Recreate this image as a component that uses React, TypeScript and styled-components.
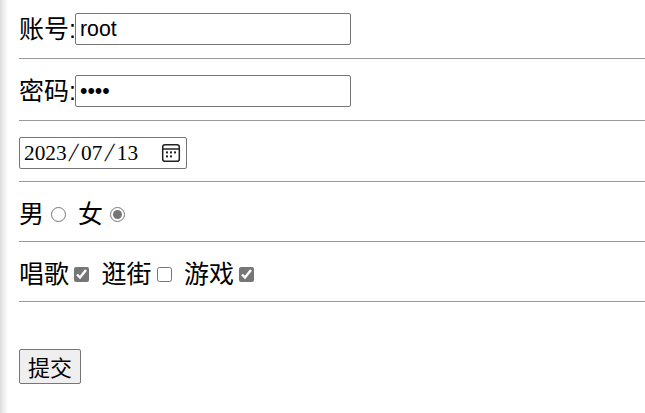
import styled, { createGlobalStyle } from 'styled-components';

const GlobalStyle = createGlobalStyle`
  html, body {
    margin: 0;
    padding: 0;
    background: #fff;
  }
`;

const Page = styled.form`
  box-sizing: border-box;
  height: 413px;
  overflow: hidden;
  padding: 13px 0 0 19px;
  background: linear-gradient(to right, #dcdcdc 0, #f0f0f0 4px, #fff 8px);
  font-family: 'Liberation Sans', 'Noto Sans CJK SC', sans-serif;
  font-size: 25px;
  color: #000;
`;

const Row = styled.div`
  display: flex;
  align-items: center;
  height: 32px;
`;

const Rule = styled.hr<{ $top: number; $bottom: number }>`
  height: 1px;
  border: 0;
  background: #999;
  margin: ${({ $top, $bottom }) => `${$top}px 0 ${$bottom}px`};
`;

const Label = styled.label`
  line-height: 32px;
  white-space: nowrap;
`;

const TextInput = styled.input`
  box-sizing: border-box;
  width: 276px;
  height: 32px;
  margin: 0 0 0 -1px;
  padding: 0 4px;
  border: 1px solid #767676;
  border-radius: 2px;
  font-family: 'Liberation Sans', sans-serif;
  font-size: 21.3px;
  color: #000;
  outline: none;
`;

const DateBox = styled.div`
  box-sizing: border-box;
  display: flex;
  align-items: center;
  justify-content: space-between;
  width: 168px;
  height: 32px;
  padding: 0 5px 0 4px;
  border: 1px solid #767676;
  border-radius: 2px;
  font-family: 'Liberation Serif', 'DejaVu Serif', serif;
  font-size: 21.3px;
`;

const DateText = styled.span`
  display: flex;
  align-items: center;
  white-space: nowrap;
`;

const Sep = styled.span`
  display: inline-block;
  margin: 0 3.6px;
  font-size: 26px;
  line-height: 1;
  transform: skewX(-12deg);
`;

const Option = styled.div`
  display: flex;
  align-items: center;
`;

const Choice = styled.input`
  width: 15px;
  height: 15px;
  margin: 1px 12.5px 0 5px;
  accent-color: #767676;

  &[type='radio'] {
    margin-left: 6.5px;
  }
`;

const Submit = styled.button`
  box-sizing: border-box;
  width: 62px;
  height: 35px;
  padding: 0 0 2px;
  border: 1px solid #767676;
  border-radius: 2px;
  background: #efefef;
  font-family: 'Liberation Sans', 'Noto Sans CJK SC', sans-serif;
  font-size: 22px;
  color: #000;
`;

const CalendarIcon = () => (
  <svg width="20" height="20" viewBox="0 0 20 20" fill="none">
    <rect x="1.7" y="1.7" width="16.6" height="16.6" rx="2.4" stroke="#222" strokeWidth="1.5" />
    <path d="M2 6h16" stroke="#222" strokeWidth="1.5" />
    <g fill="#222">
      <rect x="5" y="8.4" width="2" height="2" />
      <rect x="9" y="8.4" width="2" height="2" />
      <rect x="13" y="8.4" width="2" height="2" />
      <rect x="5" y="12.4" width="2" height="2" />
      <rect x="9" y="12.4" width="2" height="2" />
    </g>
  </svg>
);

export default function App() {
  return (
    <>
      <GlobalStyle />
      <Page onSubmit={e => e.preventDefault()}>
        <Row>
          <Label>账号:</Label>
          <TextInput type="text" defaultValue="root" />
        </Row>
        <Rule $top={13} $bottom={16} />
        <Row>
          <Label>密码:</Label>
          <TextInput type="password" defaultValue="root" />
        </Row>
        <Rule $top={13} $bottom={16} />
        <Row>
          <DateBox>
            <DateText>
              2023<Sep>/</Sep>07<Sep>/</Sep>13
            </DateText>
            <CalendarIcon />
          </DateBox>
        </Row>
        <Rule $top={12} $bottom={16} />
        <Row>
          <Option>
            <Label>男</Label>
            <Choice type="radio" name="sex" />
          </Option>
          <Option>
            <Label>女</Label>
            <Choice type="radio" name="sex" defaultChecked />
          </Option>
        </Row>
        <Rule $top={11} $bottom={16} />
        <Row>
          <Option>
            <Label>唱歌</Label>
            <Choice type="checkbox" defaultChecked />
          </Option>
          <Option>
            <Label>逛街</Label>
            <Choice type="checkbox" />
          </Option>
          <Option>
            <Label>游戏</Label>
            <Choice type="checkbox" defaultChecked />
          </Option>
        </Row>
        <Rule $top={11} $bottom={47} />
        <Submit type="submit">提交</Submit>
      </Page>
    </>
  );
}
